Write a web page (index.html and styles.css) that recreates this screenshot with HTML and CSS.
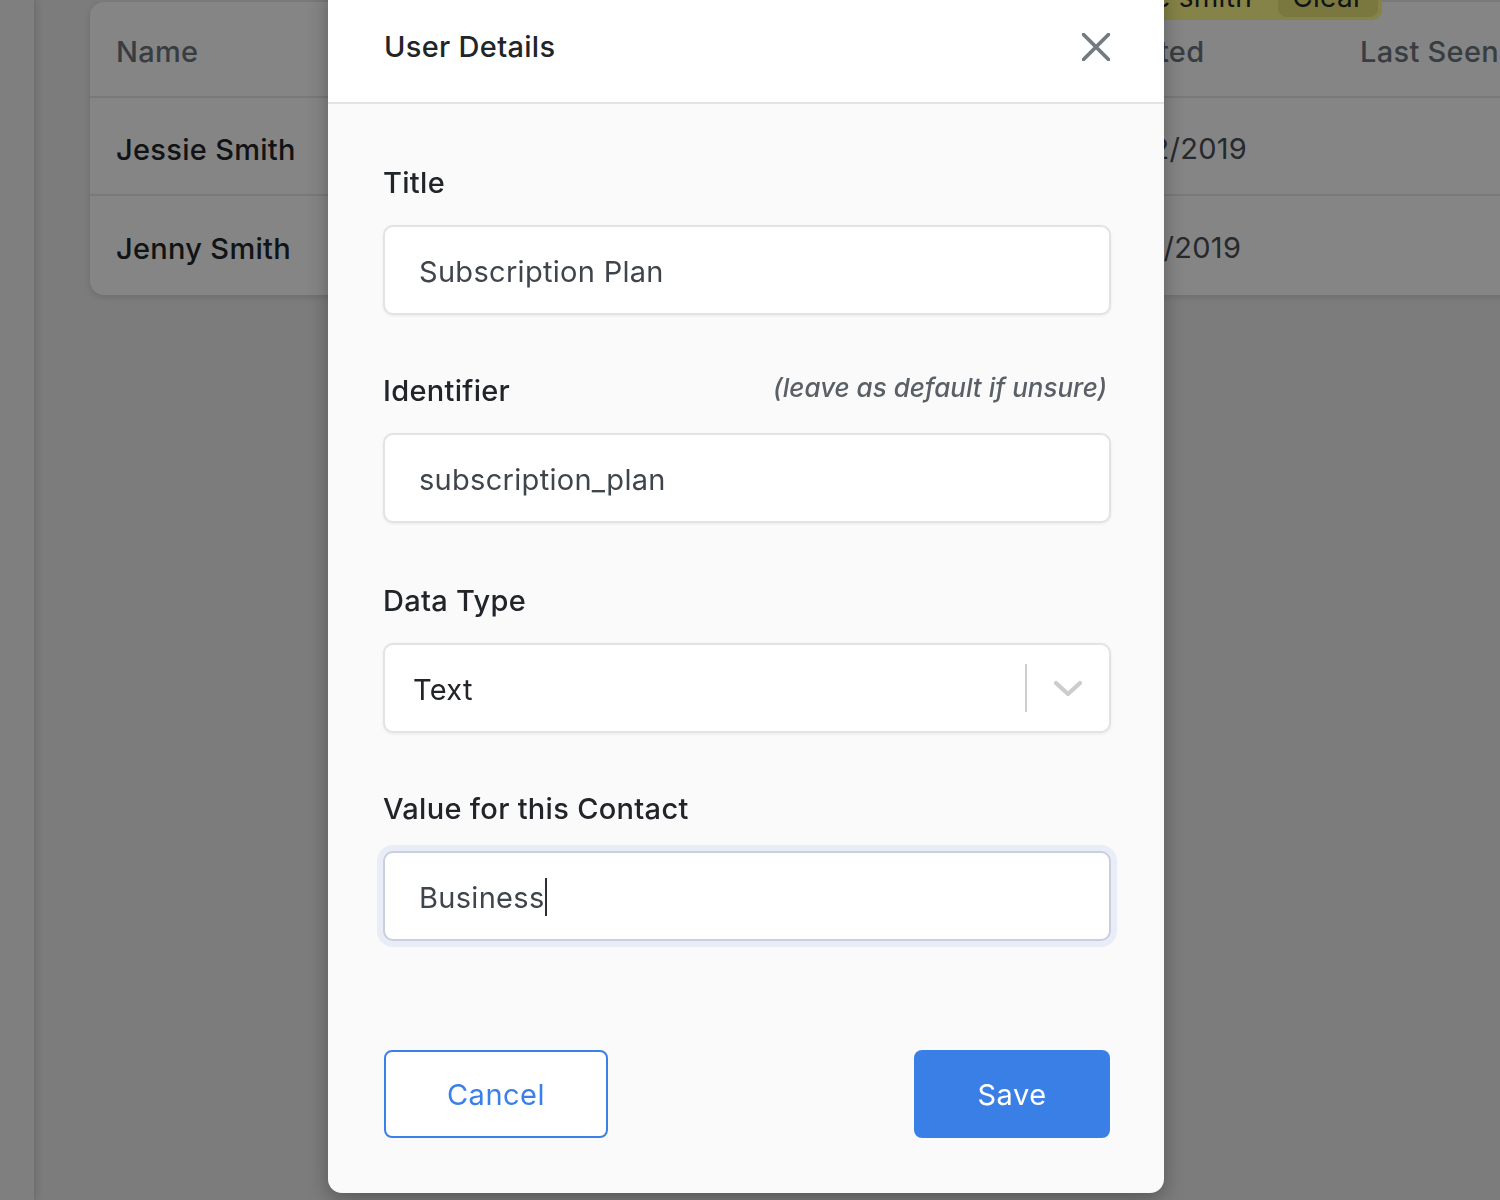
FILE: index.html
```html
<!DOCTYPE html>
<html lang="en">
<head>
<meta charset="utf-8">
<title>User Details</title>
<link rel="stylesheet" href="styles.css">
</head>
<body>
<div class="app">
  <aside class="sidebar"></aside>
  <main class="main">
    <div class="filter-toast">
      <span class="filter-text">Filtered by: jessie smith</span>
      <span class="filter-clear">Clear</span>
    </div>
    <div class="card">
      <div class="row head">
        <div class="cell">Name</div>
        <div class="cell">Created</div>
        <div class="cell">Last Seen</div>
      </div>
      <div class="row">
        <div class="cell name">Jessie Smith</div>
        <div class="cell date">10/22/2019</div>
        <div class="cell date"></div>
      </div>
      <div class="row last">
        <div class="cell name">Jenny Smith</div>
        <div class="cell date">10/12/2019</div>
        <div class="cell date"></div>
      </div>
    </div>
  </main>
</div>

<div class="overlay"></div>

<div class="modal">
  <header class="modal-head">
    <h2 class="modal-title">User Details</h2>
    <button class="close" aria-label="Close">
      <svg width="28" height="28" viewBox="0 0 28 28"><path d="M1.5 1.5 L26.5 26.5 M26.5 1.5 L1.5 26.5" stroke="#737b81" stroke-width="3.8" stroke-linecap="round"/></svg>
    </button>
  </header>
  <div class="modal-body">
    <div class="field">
      <div class="label-row"><label class="label">Title</label></div>
      <div class="input">Subscription Plan</div>
    </div>
    <div class="field field-gap">
      <div class="label-row"><label class="label">Identifier</label><span class="hint">(leave as default if unsure)</span></div>
      <div class="input">subscription_plan</div>
    </div>
    <div class="field">
      <div class="label-row"><label class="label">Data Type</label></div>
      <div class="select">
        <span class="select-value">Text</span>
        <span class="select-sep"></span>
        <span class="select-arrow">
          <svg width="30" height="18" viewBox="0 0 30 18"><path d="M3 3 L15 14 L27 3" fill="none" stroke="#cccccc" stroke-width="4.2" stroke-linecap="round" stroke-linejoin="round"/></svg>
        </span>
      </div>
    </div>
    <div class="field">
      <div class="label-row"><label class="label">Value for this Contact</label></div>
      <div class="input focused">Business<span class="caret"></span></div>
    </div>
    <div class="actions">
      <button class="btn btn-cancel">Cancel</button>
      <button class="btn btn-save">Save</button>
    </div>
  </div>
</div>
</body>
</html>
```
FILE: styles.css
```css
* { box-sizing: border-box; }
html, body {
  margin: 0;
  padding: 0;
  width: 1500px;
  height: 1200px;
  overflow: hidden;
  font-family: Inter, "Noto Sans", "Liberation Sans", sans-serif;
  letter-spacing: 0.3px;
  background: #ededed;
}
.app {
  display: flex;
  height: 1200px;
}
.sidebar {
  width: 36px;
  flex: none;
  background: #f4f4f4;
  border-right: 2px solid #d8d8d8;
  box-shadow: 2px 0 6px rgba(0,0,0,0.08);
}
.main {
  position: relative;
  flex: 1;
  min-width: 0;
  padding: 2px 0 0 54px;
}
.card {
  width: 1460px;
  background: #ffffff;
  border-radius: 14px;
  box-shadow: 0 2px 6px rgba(0,0,0,0.12);
}
.row {
  display: grid;
  grid-template-columns: 976px 268px 300px;
  padding: 4px 0 0 26px;
  height: 98px;
  align-items: center;
  border-bottom: 2px solid #e9e9e9;
  font-size: 29px;
  font-weight: 500;
  color: #212529;
  white-space: nowrap;
}
.row.head { height: 96px; color: #6c757d; }
.row.last { border-bottom: none; height: 99px; }
.row .name { padding-top: 2px; }
.cell.date { font-weight: 400; color: #495057; }
.filter-toast {
  position: absolute;
  right: 118px;
  top: -26px;
  height: 46px;
  display: flex;
  align-items: center;
  gap: 26px;
  padding: 0 4px 0 24px;
  background: #fffb88;
  border-radius: 0 0 10px 10px;
  font-size: 28px;
  color: #212529;
  white-space: nowrap;
  z-index: 2;
}
.filter-clear {
  background: #ebe67a;
  border-radius: 8px;
  width: 100px;
  height: 40px;
  display: flex;
  align-items: center;
  justify-content: center;
}
.overlay {
  position: fixed;
  inset: 0;
  background: rgba(0,0,0,0.48);
  z-index: 5;
}
.modal {
  position: absolute;
  left: 328px;
  top: -16px;
  width: 836px;
  background: #fafafa;
  border-radius: 14px;
  overflow: hidden;
  box-shadow: 0 6px 20px rgba(0,0,0,0.3);
  z-index: 10;
}
.modal-head {
  background: #ffffff;
  height: 120px;
  padding: 16px 54px 0 56px;
  border-bottom: 2px solid #e4e4e4;
  display: flex;
  justify-content: space-between;
  align-items: flex-start;
}
.modal-title {
  margin: 29px 0 0;
  font-size: 29px;
  line-height: 36px;
  font-weight: 500;
  color: #212529;
}
.close {
  margin-top: 33px;
  border: 0;
  padding: 0;
  background: none;
  width: 28px;
  height: 28px;
  display: block;
}
.close svg { display: block; }
.modal-body {
  padding: 61px 53px 55px 55px;
}
.field { margin-bottom: 58px; }
.field-gap { margin-bottom: 60px; }
.label-row {
  display: flex;
  justify-content: space-between;
  align-items: baseline;
  margin-bottom: 24px;
  height: 36px;
}
.label {
  font-size: 29px;
  line-height: 36px;
  font-weight: 500;
  color: #212529;
}
.hint {
  font-size: 26px;
  letter-spacing: 0;
  font-style: italic;
  font-weight: 500;
  color: #596067;
  margin-right: 4px;
  position: relative;
  top: -4px;
}
.input, .select {
  height: 90px;
  background: #ffffff;
  border: 2px solid #e3e3e3;
  border-radius: 10px;
  box-shadow: 0 1px 3px rgba(0,0,0,0.07);
  display: flex;
  align-items: center;
  font-size: 29px;
  color: #3f454c;
}
.input { padding-left: 34px; padding-top: 2px; }
.input.focused {
  border-color: #c9cfdd;
  box-shadow: 0 0 0 6px #e8edf7;
}
.caret {
  display: inline-block;
  width: 2px;
  height: 38px;
  background: #2b2f33;
}
.select { padding-left: 28px; padding-top: 2px; color: #212529; }
.select-value { flex: 1; }
.select-sep {
  width: 2px;
  height: 48px;
  background: #cfcfcf;
  margin-top: -2px;
}
.select-arrow {
  width: 82px;
  display: flex;
  justify-content: center;
  align-items: center;
}
.select-arrow svg { display: block; }
.actions {
  display: flex;
  justify-content: space-between;
  margin-top: 109px;
  padding-right: 1px;
}
.field:last-of-type { margin-bottom: 0; }
.btn {
  height: 88px;
  border-radius: 8px;
  font-family: inherit;
  letter-spacing: 0.5px;
  font-size: 29px;
  font-weight: 400;
  padding-top: 2px;
  cursor: pointer;
}
.btn-cancel {
  width: 224px;
  margin-left: 1px;
  background: #ffffff;
  border: 2px solid #3a80e8;
  color: #3a80e8;
}
.btn-save {
  width: 196px;
  background: #3a7fe6;
  border: 0;
  color: #ffffff;
}
```
